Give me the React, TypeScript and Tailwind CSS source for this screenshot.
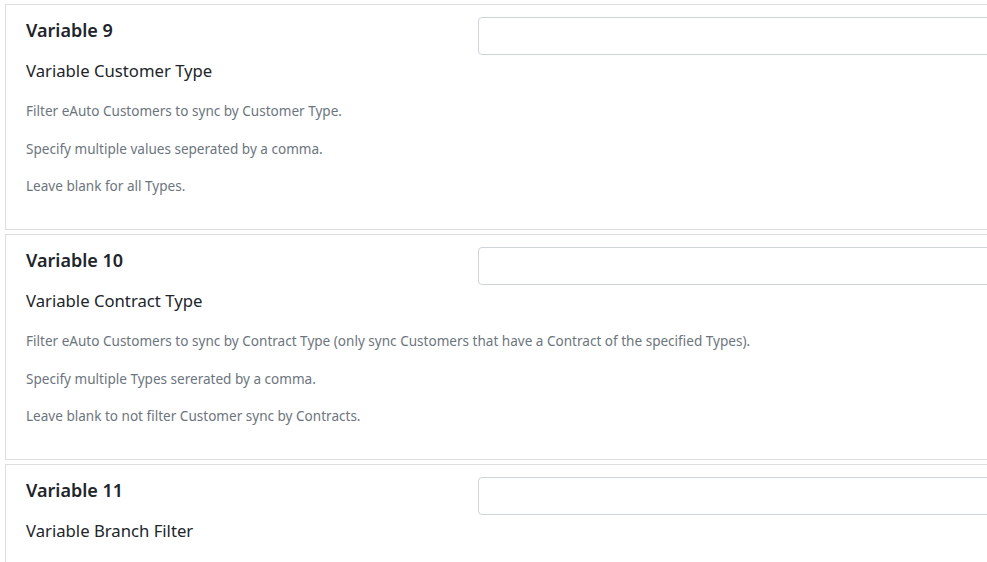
import React from "react";

type Item = { title: string; sub: string; lines: string[] };

const items: Item[] = [
  {
    title: "Variable 9",
    sub: "Variable Customer Type",
    lines: [
      "Filter eAuto Customers to sync by Customer Type.",
      "Specify multiple values seperated by a comma.",
      "Leave blank for all Types.",
    ],
  },
  {
    title: "Variable 10",
    sub: "Variable Contract Type",
    lines: [
      "Filter eAuto Customers to sync by Contract Type (only sync Customers that have a Contract of the specified Types).",
      "Specify multiple Types sererated by a comma.",
      "Leave blank to not filter Customer sync by Contracts.",
    ],
  },
  {
    title: "Variable 11",
    sub: "Variable Branch Filter",
    lines: [],
  },
];

function Card({ item }: { item: Item }) {
  return (
    <div className="relative shrink-0 w-[1000px] h-[226px] border border-[#dedede] bg-white">
      <div className="w-[452px] ml-[20px] pt-[14px]">
        <div className="text-[18px] leading-[22px] font-semibold text-[#212529] whitespace-nowrap">
          {item.title}
        </div>
        <div className="mt-[19px] text-[16.7px] leading-[22px] text-[#212529] whitespace-nowrap">
          {item.sub}
        </div>
        <div className="mt-[19px] flex flex-col gap-[17.5px]">
          {item.lines.map((l, i) => (
            <div key={i} className="text-[13.55px] leading-[20px] text-[#6c757d] whitespace-nowrap">
              {l}
            </div>
          ))}
        </div>
      </div>
      <div className="absolute left-[472px] top-[12px] w-[600px] h-[38px] border border-[#ced4da] rounded-[4px] bg-white" />
    </div>
  );
}

export default function App() {
  return (
    <div
      className="w-[987px] h-[562px] overflow-hidden bg-white pt-[4px] pl-[5px] flex flex-col gap-[4px]"
      style={{ fontFamily: '"Noto Sans", "Open Sans", sans-serif' }}
    >
      {items.map((it, i) => (
        <Card key={i} item={it} />
      ))}
    </div>
  );
}
